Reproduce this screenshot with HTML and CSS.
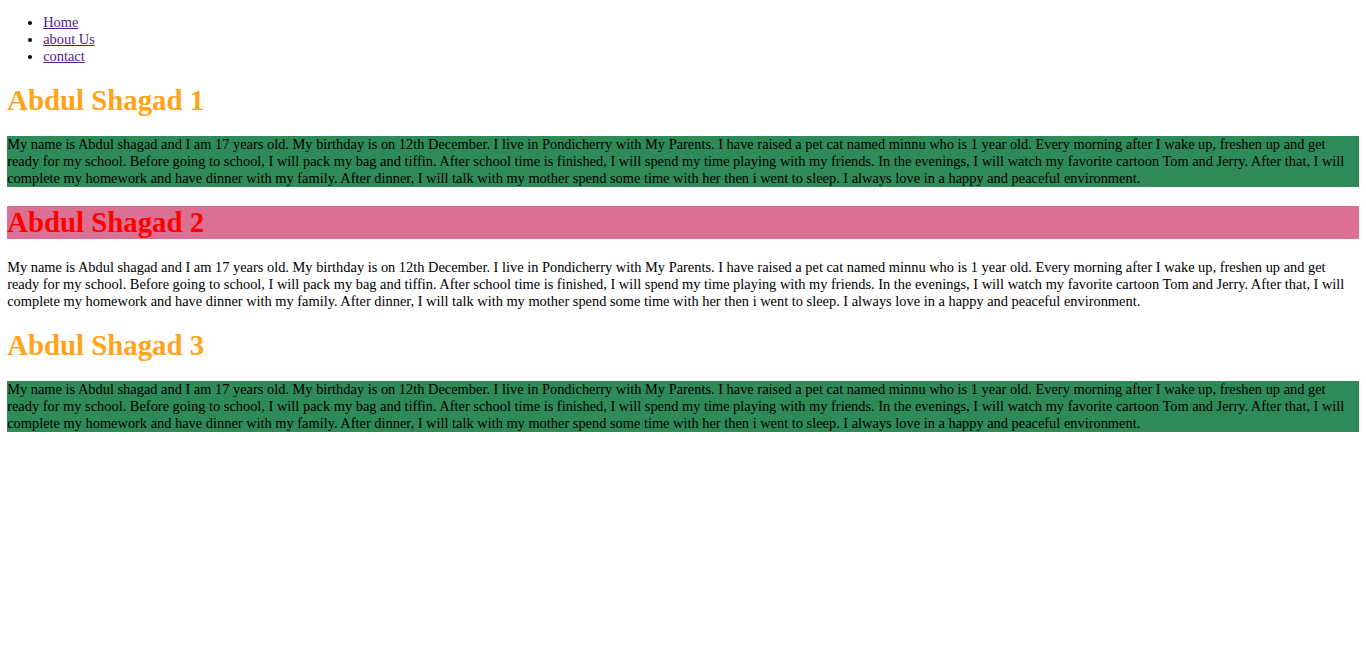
FILE: index.html
```html
<!DOCTYPE html>
<html>
<head>
<meta charset="utf-8">
<title>Abdul Shagad</title>
<link rel="stylesheet" href="styles.css">
</head>
<body>
<ul class="nav">
  <li><a href="#">Home</a></li>
  <li><a href="#">about Us</a></li>
  <li><a href="#">contact</a></li>
</ul>
<h1 class="title orange">Abdul Shagad 1</h1>
<p class="text green">My name is Abdul shagad and I am 17 years old. My birthday is on 12th December. I live in Pondicherry with My Parents. I have raised a pet cat named minnu who is 1 year old. Every morning after I wake up, freshen up and get ready for my school. Before going to school, I will pack my bag and tiffin. After school time is finished, I will spend my time playing with my friends. In the evenings, I will watch my favorite cartoon Tom and Jerry. After that, I will complete my homework and have dinner with my family. After dinner, I will talk with my mother spend some time with her then i went to sleep. I always love in a happy and peaceful environment.</p>
<h1 class="title pink">Abdul Shagad 2</h1>
<p class="text">My name is Abdul shagad and I am 17 years old. My birthday is on 12th December. I live in Pondicherry with My Parents. I have raised a pet cat named minnu who is 1 year old. Every morning after I wake up, freshen up and get ready for my school. Before going to school, I will pack my bag and tiffin. After school time is finished, I will spend my time playing with my friends. In the evenings, I will watch my favorite cartoon Tom and Jerry. After that, I will complete my homework and have dinner with my family. After dinner, I will talk with my mother spend some time with her then i went to sleep. I always love in a happy and peaceful environment.</p>
<h1 class="title orange">Abdul Shagad 3</h1>
<p class="text green">My name is Abdul shagad and I am 17 years old. My birthday is on 12th December. I live in Pondicherry with My Parents. I have raised a pet cat named minnu who is 1 year old. Every morning after I wake up, freshen up and get ready for my school. Before going to school, I will pack my bag and tiffin. After school time is finished, I will spend my time playing with my friends. In the evenings, I will watch my favorite cartoon Tom and Jerry. After that, I will complete my homework and have dinner with my family. After dinner, I will talk with my mother spend some time with her then i went to sleep. I always love in a happy and peaceful environment.</p>
</body>
</html>
```
FILE: styles.css
```css
html, body {
  background: #fff;
}
body {
  margin: 0;
  padding: 7.2px;
  font-family: "Liberation Serif", "Times New Roman", serif;
  font-size: 14.4px;
  line-height: 17px;
  color: #000;
}
.nav {
  margin: 6.4px 0 14.4px;
  padding-left: 36px;
}
.nav a {
  color: #551a8b;
}
.title {
  font-size: 28.8px;
  line-height: 33px;
  font-weight: bold;
  margin: 19.3px 0;
}
.orange {
  color: #ffa31a;
}
.pink {
  background: #db7093;
  color: #ff0000;
}
.text {
  margin: 14.4px 0;
}
.green {
  background: #2e8b57;
}
```
